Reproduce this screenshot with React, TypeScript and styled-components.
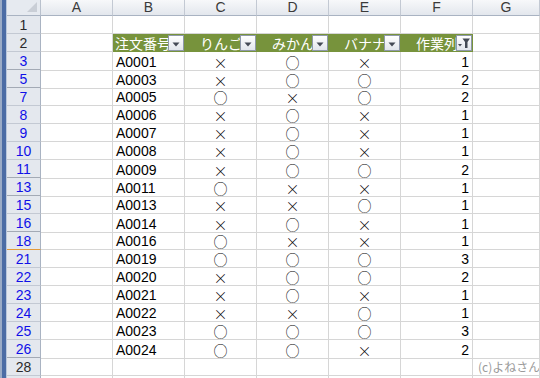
import * as React from "react";
import styled, { createGlobalStyle } from "styled-components";

const GlobalStyle = createGlobalStyle`
    html, body {
        margin: 0;
        padding: 0;
        background: #ffffff;
        overflow: hidden;
    }
`;

type Mark = "o" | "x";

interface DataRow {
    n: number;
    id: string;
    apple: Mark;
    orange: Mark;
    banana: Mark;
    work: number;
}

const data: DataRow[] = [
    { n: 3, id: "A0001", apple: "x", orange: "o", banana: "x", work: 1 },
    { n: 5, id: "A0003", apple: "x", orange: "o", banana: "o", work: 2 },
    { n: 7, id: "A0005", apple: "o", orange: "x", banana: "o", work: 2 },
    { n: 8, id: "A0006", apple: "x", orange: "o", banana: "x", work: 1 },
    { n: 9, id: "A0007", apple: "x", orange: "o", banana: "x", work: 1 },
    { n: 10, id: "A0008", apple: "x", orange: "o", banana: "x", work: 1 },
    { n: 11, id: "A0009", apple: "x", orange: "o", banana: "o", work: 2 },
    { n: 13, id: "A0011", apple: "o", orange: "x", banana: "x", work: 1 },
    { n: 15, id: "A0013", apple: "x", orange: "x", banana: "o", work: 1 },
    { n: 16, id: "A0014", apple: "x", orange: "o", banana: "x", work: 1 },
    { n: 18, id: "A0016", apple: "o", orange: "x", banana: "x", work: 1 },
    { n: 21, id: "A0019", apple: "o", orange: "o", banana: "o", work: 3 },
    { n: 22, id: "A0020", apple: "x", orange: "o", banana: "o", work: 2 },
    { n: 23, id: "A0021", apple: "x", orange: "o", banana: "x", work: 1 },
    { n: 24, id: "A0022", apple: "x", orange: "x", banana: "o", work: 1 },
    { n: 25, id: "A0023", apple: "o", orange: "o", banana: "o", work: 3 },
    { n: 26, id: "A0024", apple: "o", orange: "o", banana: "x", work: 2 },
];

// rows followed by hidden rows get a heavier line in the row header
const hiddenAfter: Record<number, "gray" | "orange"> = {
    3: "gray",
    5: "gray",
    11: "gray",
    13: "gray",
    16: "gray",
    18: "orange",
    26: "gray",
};

const GRID = "#d6d6d6";
const GREEN = "#77933c";
const COLS = "34px 72px 72px 72px 72px 72px 72px 1fr";

const Window = styled.div`
    display: flex;
    width: 540px;
    height: 378px;
    overflow: hidden;
    font-family: "Liberation Sans", "Noto Sans CJK JP", sans-serif;
`;

const FrameEdge = styled.div`
    width: 7px;
    flex: none;
    background: linear-gradient(to right, #9aabc6 0 2px, #4b6ca5 2px 6px, #b9c7dc 6px 7px);
`;

const Sheet = styled.div`
    flex: 1;
    display: flex;
    flex-direction: column;
`;

const Row = styled.div<{ $height: number }>`
    display: grid;
    grid-template-columns: ${COLS};
    height: ${(p) => p.$height}px;
    flex: none;
`;

const Corner = styled.div`
    position: relative;
    box-sizing: border-box;
    background: #e6eaf0;
    border-right: 1px solid #b9c1cd;
    border-bottom: 1px solid #a9b3c2;

    &::after {
        content: "";
        position: absolute;
        right: 3px;
        bottom: 3px;
        border-left: 10px solid transparent;
        border-bottom: 10px solid #c9ced6;
    }
`;

const ColHead = styled.div`
    box-sizing: border-box;
    display: flex;
    align-items: center;
    justify-content: center;
    background: linear-gradient(#f7f8fa, #e3e7ed);
    border-right: 1px solid #c3c9d3;
    border-bottom: 1px solid #a9b3c2;
    color: #3a3a3a;
    font-size: 14px;
    line-height: 15px;
`;

const RowHead = styled.div<{ $filtered?: boolean; $mark?: "gray" | "orange" }>`
    box-sizing: border-box;
    display: flex;
    align-items: center;
    justify-content: center;
    background: #e4e8ee;
    border-right: 1px solid #a9b3c2;
    border-bottom: ${(p) =>
        p.$mark === "gray" ? "2px solid #a3aab5" : p.$mark === "orange" ? "1px solid #e39a3a" : "1px solid #c3c9d3"};
    color: ${(p) => (p.$filtered ? "#1010e8" : "#2a2a2a")};
    font-size: 14px;
    line-height: 16px;
    padding-top: 1px;
`;

const Cell = styled.div<{ $align?: "left" | "center" | "right" }>`
    box-sizing: border-box;
    display: flex;
    align-items: center;
    justify-content: ${(p) => (p.$align === "right" ? "flex-end" : p.$align === "center" ? "center" : "flex-start")};
    padding: 1px 3px 0;
    border-right: 1px solid ${GRID};
    border-bottom: 1px solid ${GRID};
    color: #000000;
    font-size: 14px;
    line-height: 16px;
    white-space: nowrap;
    overflow: hidden;
`;

const Symbol = styled.span`
    font-family: "Noto Sans CJK JP", sans-serif;
    font-weight: 300;
    font-size: 14px;
    line-height: 16px;
`;

const HeadCell = styled.div<{ $align?: "left" | "center" }>`
    position: relative;
    box-sizing: border-box;
    display: flex;
    align-items: center;
    justify-content: ${(p) => (p.$align === "center" ? "center" : "flex-start")};
    padding: 0 2px;
    background: ${GREEN};
    border-bottom: 1px solid ${GREEN};
    color: #ffffff;
    font-family: "Noto Sans CJK JP", sans-serif;
    font-size: 14px;
    line-height: 16px;
    white-space: nowrap;
    overflow: hidden;
`;

const FilterButton = styled.div`
    position: absolute;
    top: 1px;
    right: 1px;
    width: 16px;
    height: 16px;
    box-sizing: border-box;
    display: flex;
    align-items: center;
    justify-content: center;
    background: linear-gradient(#ffffff, #e2e6ec);
    border: 1px solid #8e98a9;
`;

const Credit = styled.span`
    color: #9a9a9a;
    font-family: "Noto Sans CJK JP", sans-serif;
    font-size: 12px;
    line-height: 14px;
    margin-left: 2px;
`;

const Arrow = () => (
    <svg width="8" height="5" viewBox="0 0 8 5" style={{ marginTop: 2 }}>
        <path d="M0.5 0.5 H7.5 L4 4.5 Z" fill="#444a55" />
    </svg>
);

const Funnel = () => (
    <svg width="14" height="12" viewBox="0 0 14 12">
        <path d="M1 7 H5 L3 9.5 Z" fill="#444a55" />
        <path d="M5.5 1.5 H13 L10.5 5 V11 H8 V5 Z" fill="#444a55" />
    </svg>
);

const mark = (m: Mark) => <Symbol>{m === "o" ? "○" : "×"}</Symbol>;

const headers: { label: string; align: "left" | "center"; active?: boolean }[] = [
    { label: "注文番号", align: "left" },
    { label: "りんご", align: "center" },
    { label: "みかん", align: "center" },
    { label: "バナナ", align: "center" },
    { label: "作業列", align: "center", active: true },
];

const EmptyCells = ({ count }: { count: number }) => (
    <>
        {Array.from({ length: count }, (_, i) => (
            <Cell key={i} />
        ))}
    </>
);

export default function App() {
    return (
        <Window>
            <GlobalStyle />
            <FrameEdge />
            <Sheet>
                <Row $height={16}>
                    <Corner />
                    {["A", "B", "C", "D", "E", "F", "G"].map((c) => (
                        <ColHead key={c}>{c}</ColHead>
                    ))}
                </Row>
                <Row $height={18}>
                    <RowHead>1</RowHead>
                    <EmptyCells count={7} />
                </Row>
                <Row $height={18}>
                    <RowHead>2</RowHead>
                    <Cell />
                    {headers.map((h) => (
                        <HeadCell key={h.label} $align={h.align}>
                            {h.label}
                            <FilterButton>{h.active ? <Funnel /> : <Arrow />}</FilterButton>
                        </HeadCell>
                    ))}
                    <Cell />
                </Row>
                {data.map((r) => (
                    <Row key={r.n} $height={18}>
                        <RowHead $filtered $mark={hiddenAfter[r.n]}>
                            {r.n}
                        </RowHead>
                        <Cell />
                        <Cell>{r.id}</Cell>
                        <Cell $align="center">{mark(r.apple)}</Cell>
                        <Cell $align="center">{mark(r.orange)}</Cell>
                        <Cell $align="center">{mark(r.banana)}</Cell>
                        <Cell $align="right">{r.work}</Cell>
                        <Cell />
                    </Row>
                ))}
                <Row $height={18}>
                    <RowHead>28</RowHead>
                    <EmptyCells count={6} />
                    <Cell>
                        <Credit>(c)よねさん</Credit>
                    </Cell>
                </Row>
                <Row $height={18}>
                    <RowHead />
                    <EmptyCells count={7} />
                </Row>
            </Sheet>
        </Window>
    );
}
